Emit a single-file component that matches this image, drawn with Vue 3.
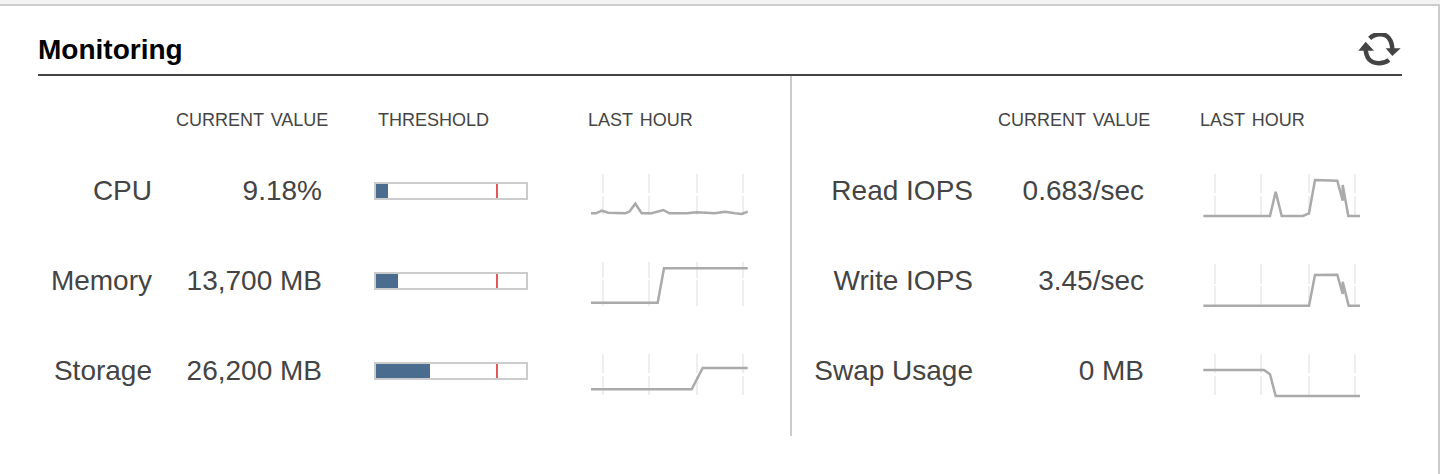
<template>
  <div class="page">
    <section class="card">
      <header class="card-head">
        <h2>Monitoring</h2>
        <svg class="refresh" width="44" height="34" viewBox="0 0 44 34">
          <path d="M11.7 5.3 C17 0 27 -0.5 31 5.3 C33.5 8.5 34.3 12 34.3 17" fill="none" stroke="#444" stroke-width="4.5" />
          <path d="M27.7 15.3 H42.7 L34.3 23 Z" fill="#444" />
          <path d="M31 27 C25 31.5 16 31.5 11 26.3 C8.7 23.5 7.7 20 7.7 15.3" fill="none" stroke="#444" stroke-width="4.5" />
          <path d="M0.3 17.7 H16 L7.7 8.7 Z" fill="#444" />
        </svg>
      </header>
      <div class="panels">
        <div class="panel panel-left">
          <div class="cols">
            <span class="col-current">CURRENT VALUE</span>
            <span class="col-threshold">THRESHOLD</span>
            <span>LAST HOUR</span>
          </div>
          <div v-for="row in leftRows" :key="row.label" class="row">
            <div class="label">{{ row.label }}</div>
            <div class="value">{{ row.value }}</div>
            <div class="bar">
              <div class="bar-fill" :style="{ width: row.used + 'px' }"></div>
              <div class="bar-mark"></div>
            </div>
            <svg class="spark" width="160" height="44" viewBox="0 0 160 44">
              <path :d="row.grid || defaultGrid" stroke="#eee" stroke-width="2" fill="none" />
              <polyline :points="row.points" fill="none" stroke="#aaa" stroke-width="2.5" />
            </svg>
          </div>
        </div>
        <div class="panel panel-right">
          <div class="cols">
            <span class="col-current">CURRENT VALUE</span>
            <span>LAST HOUR</span>
          </div>
          <div v-for="row in rightRows" :key="row.label" class="row">
            <div class="label">{{ row.label }}</div>
            <div class="value">{{ row.value }}</div>
            <svg class="spark" width="160" height="44" viewBox="0 0 160 44">
              <path :d="row.grid || defaultGrid" stroke="#eee" stroke-width="2" fill="none" />
              <polyline :points="row.points" fill="none" stroke="#aaa" stroke-width="2.5" />
            </svg>
          </div>
        </div>
      </div>
    </section>
  </div>
</template>

<script setup>
function gridLines(a, b, c, d) {
  return [13, 59, 107, 153].map((x) => `M${x} ${a}V${b}M${x} ${c}V${d}`).join('')
}

const defaultGrid = gridLines(0, 19, 22, 41)

const leftRows = [
  {
    label: 'CPU',
    value: '9.18%',
    used: 12,
    points: '1,39.3 6,39.3 11.7,36.7 18.3,38.7 35,39.3 39.3,37.7 45.3,29.7 51.7,39.3 61.7,39.3 73.3,36 79.3,39.3 96.7,39.3 106.7,38.3 125,39.3 135,37.7 145,39.3 151.7,40 157.7,37.7',
  },
  {
    label: 'Memory',
    value: '13,700 MB',
    used: 22,
    grid: gridLines(-2, 14, 16, 42),
    points: '1,38.7 67.7,38.7 74,4.3 157.7,4.3',
  },
  { label: 'Storage', value: '26,200 MB', used: 54, points: '1,35.3 101.7,35.3 112.7,14 157.7,14' },
]

const rightRows = [
  {
    label: 'Read IOPS',
    value: '0.683/sec',
    points: '1.3,42 68,42 73.7,17.7 79.7,42 101,42 107,39.3 113,6 135.3,6.7 140.7,26.7 140.7,11 146.3,42 158,42',
  },
  {
    label: 'Write IOPS',
    value: '3.45/sec',
    grid: gridLines(0, 20, 22, 42),
    points: '1.3,41.7 107,41.7 113,11 135.3,10.7 140.7,30 140.7,17.7 146.7,41.7 158,41.7',
  },
  { label: 'Swap Usage', value: '0 MB', points: '1.3,16 62,16 68,20.3 73.7,42 158,42' },
]
</script>

<style scoped>
.page {
  height: 474px;
  padding-top: 4px;
  box-sizing: border-box;
  background: #f3f3f3;
  font-family: 'Liberation Sans', Arial, sans-serif;
  color: #444;
}

.card {
  height: 470px;
  box-sizing: border-box;
  padding: 0 36px 0 38px;
  background: #fff;
  border-top: 2px solid #ccc;
  border-right: 2px solid #ccc;
}

.card-head {
  height: 70px;
  box-sizing: border-box;
  display: flex;
  justify-content: space-between;
  align-items: flex-start;
  border-bottom: 2px solid #444;
}

.card-head h2 {
  margin: 27px 0 0;
  font-size: 28px;
  line-height: 34px;
  font-weight: 700;
  color: #000;
}

.refresh {
  margin-top: 27px;
}

.panels {
  display: flex;
}

.panel {
  height: 360px;
  box-sizing: border-box;
}

.panel-left {
  width: 754px;
  border-right: 2px solid #ccc;
}

.cols {
  display: flex;
  height: 70px;
  padding-top: 34px;
  box-sizing: border-box;
  font-size: 18px;
  line-height: 20px;
  word-spacing: 2px;
}

.panel-left .cols {
  padding-left: 138px;
}

.panel-left .col-current {
  width: 202px;
}

.panel-left .col-threshold {
  width: 210px;
}

.panel-right .cols {
  padding-left: 206px;
}

.panel-right .col-current {
  width: 202px;
}

.row {
  display: flex;
  align-items: center;
  height: 90px;
}

.label,
.value {
  font-size: 28px;
  text-align: right;
  white-space: nowrap;
}

.panel-left .label {
  width: 114px;
}

.panel-left .value {
  width: 170px;
}

.panel-right .label {
  width: 181px;
}

.panel-right .value {
  width: 171px;
}

.bar {
  position: relative;
  width: 154px;
  height: 18px;
  box-sizing: border-box;
  margin: 0 62px 0 52px;
  border: 2px solid #ccc;
}

.bar-fill {
  height: 100%;
  background: #4a6d8f;
}

.bar-mark {
  position: absolute;
  top: 0;
  bottom: 0;
  left: 120px;
  width: 2px;
  background: #e05a5a;
}

.spark {
  margin-top: 10px;
  overflow: visible;
}

.panel-right .spark {
  margin-left: 58px;
}
</style>
